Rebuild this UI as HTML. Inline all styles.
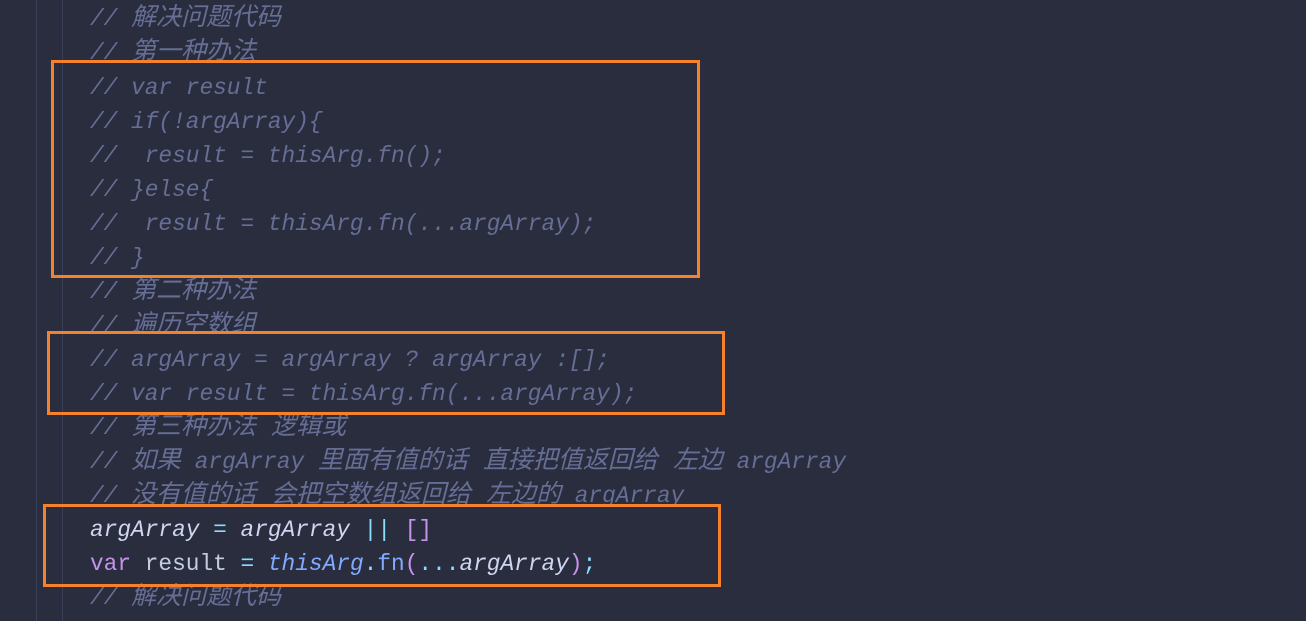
<!DOCTYPE html>
<html><head><meta charset="utf-8"><style>
html,body{margin:0;padding:0;}
body{width:1306px;height:621px;background:#292d3e;position:relative;overflow:hidden;}
.g{position:absolute;top:0;height:621px;width:1px;background:#3a3f58;}
.l{position:absolute;left:90px;height:34px;line-height:34px;font-family:"Liberation Mono","Noto Sans CJK SC",monospace;font-size:22.8px;white-space:pre;color:#676e95;font-style:italic;}
.k{font-size:25px;}
.box{position:absolute;border:3px solid #f5822a;box-sizing:border-box;}
.v{color:#c3cee3;font-style:normal}
.a{color:#d0d6f0;font-style:italic}
.c{color:#89ddff;font-style:normal}
.p{color:#c792ea;font-style:normal}
.f{color:#82aaff;font-style:normal}
</style></head><body>
<div class="g" style="left:36px"></div>
<div class="g" style="left:62px"></div>
<div class="l" style="top:2px">// <span class="k">解决问题代码</span></div>
<div class="l" style="top:36px">// <span class="k">第一种办法</span></div>
<div class="l" style="top:71px">// var result</div>
<div class="l" style="top:105px">// if(!argArray){</div>
<div class="l" style="top:139px">//  result = thisArg.fn();</div>
<div class="l" style="top:173px">// }else{</div>
<div class="l" style="top:207px">//  result = thisArg.fn(...argArray);</div>
<div class="l" style="top:241px">// }</div>
<div class="l" style="top:275px">// <span class="k">第二种办法</span></div>
<div class="l" style="top:309px">// <span class="k">遍历空数组</span></div>
<div class="l" style="top:343px">// argArray = argArray ? argArray :[];</div>
<div class="l" style="top:377px">// var result = thisArg.fn(...argArray);</div>
<div class="l" style="top:411px">// <span class="k">第三种办法 逻辑或</span></div>
<div class="l" style="top:445px">// <span class="k">如果</span> argArray <span class="k">里面有值的话 直接把值返回给 左边</span> argArray</div>
<div class="l" style="top:479px">// <span class="k">没有值的话 会把空数组返回给 左边的</span> argArray</div>
<div class="l" style="top:513px"><span class="a">argArray</span><span class="v"> </span><span class="c">=</span><span class="v"> </span><span class="a">argArray</span><span class="v"> </span><span class="c">||</span><span class="v"> </span><span class="p">[]</span></div>
<div class="l" style="top:547px"><span class="p">var</span><span class="v"> result </span><span class="c">=</span><span class="v"> </span><span class="f" style="font-style:italic">thisArg</span><span class="c">.</span><span class="f">fn</span><span class="p">(</span><span class="c">...</span><span class="a">argArray</span><span class="p">)</span><span class="c">;</span></div>
<div class="l" style="top:581px">// <span class="k">解决问题代码</span></div>
<div class="box" style="left:51px;top:60px;width:649px;height:218px"></div>
<div class="box" style="left:47px;top:331px;width:678px;height:84px"></div>
<div class="box" style="left:43px;top:504px;width:678px;height:83px"></div>
</body></html>
